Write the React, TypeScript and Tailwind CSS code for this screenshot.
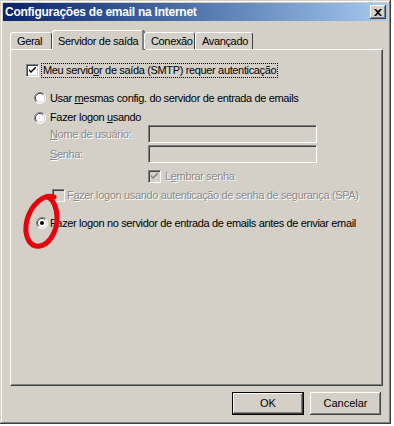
import type { ReactNode } from "react";

const raised =
  "shadow-[inset_-1px_-1px_0_#404040,inset_1px_1px_0_#fff,inset_-2px_-2px_0_#808080]";

function CheckBox({ checked, disabled }: { checked?: boolean; disabled?: boolean }) {
  return (
    <div
      className={`w-[13px] h-[13px] shrink-0 flex items-center justify-center border border-t-[#808080] border-l-[#808080] border-b-white border-r-white shadow-[inset_1px_1px_0_#404040,inset_-1px_-1px_0_#d4d0c8] ${
        disabled ? "bg-[#d4d0c8]" : "bg-white"
      }`}
    >
      {checked && (
        <svg width="7" height="7" viewBox="0 0 7 7">
          <path
            d="M0 2 L0 4 L2 6 L7 1 L7 -1 L2 4 Z"
            fill={disabled ? "#808080" : "#000"}
          />
        </svg>
      )}
    </div>
  );
}

function Radio({ checked }: { checked?: boolean }) {
  return (
    <svg width="12" height="12" viewBox="0 0 12 12" className="shrink-0">
      <circle cx="6" cy="6" r="5.5" fill="#fff" />
      <path d="M2.1 9.9 A5.5 5.5 0 0 1 9.9 2.1" stroke="#808080" fill="none" />
      <path d="M9.9 2.1 A5.5 5.5 0 0 1 2.1 9.9" stroke="#fff" fill="none" />
      <path d="M2.8 9.2 A4.5 4.5 0 0 1 9.2 2.8" stroke="#404040" fill="none" />
      <path d="M9.2 2.8 A4.5 4.5 0 0 1 2.8 9.2" stroke="#d4d0c8" fill="none" />
      {checked && <circle cx="6" cy="6" r="2" fill="#000" />}
    </svg>
  );
}

function Dim({ children }: { children: ReactNode }) {
  return <span className="text-[#8a8a8a] [text-shadow:1px_1px_0_#fff]">{children}</span>;
}

function Field() {
  return (
    <div className="w-[169px] h-[18px] bg-[#d4d0c8] border border-t-[#808080] border-l-[#808080] border-b-white border-r-white shadow-[inset_1px_1px_0_#404040,inset_-1px_-1px_0_#d4d0c8]" />
  );
}

const tabs = [
  { label: "Geral", w: "w-[42px]" },
  { label: "Servidor de saída", w: "w-[92px]", active: true },
  { label: "Conexão", w: "w-[51px]" },
  { label: "Avançado", w: "w-[58px]" },
];

export default function App() {
  return (
    <div className="w-[394px] h-[426px] bg-white font-['Liberation_Sans',Arial,sans-serif] text-[11px] tracking-[-0.35px] text-black whitespace-nowrap">
      <div className="relative w-[391px] h-[424px] bg-[#d4d0c8] p-[3px] flex flex-col shadow-[inset_-1px_-1px_0_#404040,inset_1px_1px_0_#d4d0c8,inset_-2px_-2px_0_#808080,inset_2px_2px_0_#fff]">
        {/* Title bar */}
        <div className="h-[18px] flex items-center justify-between bg-linear-to-r from-[#0a246a] to-[#a6caf0] pl-[2px] pr-[2px]">
          <span className="text-white font-bold text-[12px] tracking-[-0.25px]">
            Configurações de email na Internet
          </span>
          <div className={`w-[16px] h-[14px] bg-[#d4d0c8] flex items-center justify-center ${raised}`}>
            <svg width="8" height="7" viewBox="0 0 8 7">
              <path d="M0 0 L2 0 L4 2 L6 0 L8 0 L5 3.5 L8 7 L6 7 L4 5 L2 7 L0 7 L3 3.5 Z" fill="#000" />
            </svg>
          </div>
        </div>

        {/* Tabs */}
        <div className="mt-[9px] ml-[7px] flex items-end h-[19px] relative z-10">
          {tabs.map((t) =>
            t.active ? (
              <div
                key={t.label}
                className={`${t.w} h-[20px] -mb-[1px] bg-[#d4d0c8] border-l border-t border-white border-r-2 border-r-[#808080] rounded-t-[3px] shadow-[1px_0_0_#404040] flex items-start pt-[2px] pl-[5px]`}
              >
                {t.label}
              </div>
            ) : (
              <div
                key={t.label}
                className={`${t.w} h-[17px] bg-[#d4d0c8] border-l border-t border-white border-r border-r-[#404040] rounded-t-[3px] flex items-center pl-[6px] pt-[1px]`}
              >
                {t.label}
              </div>
            )
          )}
        </div>

        {/* Panel */}
        <div className="ml-[7px] w-[373px] h-[337px] border border-t-white border-l-white border-r-[#404040] border-b-[#404040] shadow-[inset_-1px_-1px_0_#808080] flex flex-col pl-[15px] pt-[12px]">
          <div className="flex items-center h-[16px]">
            <CheckBox checked />
            <span className="ml-[2px] px-[1px] border border-dotted border-black leading-[13px]">
              Meu servid<u>o</u>r de saída (SMTP) requer autenticação
            </span>
          </div>

          <div className="mt-[12px] ml-[8px] flex items-center h-[16px] gap-[4px]">
            <Radio />
            <span>
              Usar <u>m</u>esmas config. do servidor de entrada de emails
            </span>
          </div>
          <div className="mt-[4px] ml-[8px] flex items-center h-[15px] gap-[4px]">
            <Radio />
            <span>
              Fazer logon <u>u</u>sando
            </span>
          </div>

          <div className="mt-0 ml-[24px] flex items-center h-[18px]">
            <span className="w-[98px]">
              <Dim>
                <u>N</u>ome de usuário:
              </Dim>
            </span>
            <Field />
          </div>
          <div className="mt-[2px] ml-[24px] flex items-center h-[18px]">
            <span className="w-[98px]">
              <Dim>
                <u>S</u>enha:
              </Dim>
            </span>
            <Field />
          </div>

          <div className="mt-[6px] ml-[122px] flex items-center h-[15px] gap-[4px]">
            <CheckBox checked disabled />
            <Dim>
              L<u>e</u>mbrar senha
            </Dim>
          </div>

          <div className="mt-[4px] ml-[26px] flex items-center h-[15px] gap-[2px]">
            <CheckBox disabled />
            <Dim>
              F<u>a</u>zer logon usando autenticação de senha de segurança (SPA)
            </Dim>
          </div>

          <div className="mt-[12px] ml-[10px] flex items-center h-[16px] gap-[2px]">
            <Radio checked />
            <span>Fazer logon no servidor de entrada de emails antes de enviar email</span>
          </div>
        </div>

        {/* Buttons */}
        <div className="mt-[6px] ml-[229px] flex gap-[6px] tracking-normal">
          <div className="w-[72px] h-[23px] border border-black bg-[#d4d0c8] flex items-center justify-center shadow-[inset_-1px_-1px_0_#404040,inset_1px_1px_0_#fff,inset_-2px_-2px_0_#808080]">
            OK
          </div>
          <div className={`w-[71px] h-[23px] bg-[#d4d0c8] flex items-center justify-center ${raised}`}>
            Cancelar
          </div>
        </div>

        {/* red hand-drawn circle */}
        <svg className="absolute left-0 top-0 pointer-events-none" width="394" height="426">
          <path
            d="M54 197 C44 193 31 205 27 220 C23 236 30 248 40 246 C50 244 57 231 57 218 C57 207 53 199 47 197"
            stroke="#e8000c"
            strokeWidth="5"
            fill="none"
            strokeLinecap="round"
          />
        </svg>
      </div>
    </div>
  );
}
